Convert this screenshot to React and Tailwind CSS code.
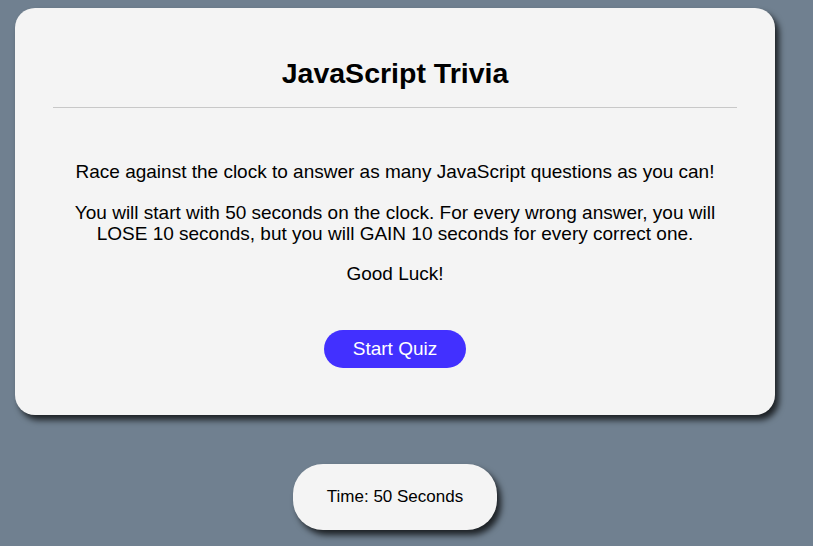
import React from 'react';

export default function App() {
  return (
    <div className="min-h-screen bg-[#708090] pt-[8px] font-['Liberation_Sans',Arial,sans-serif] text-black">
      <div className="ml-[15px] w-[760px]">
        <section className="h-[407px] rounded-[20px] bg-[#f4f4f4] px-[38px] text-center shadow-[4px_5px_6px_rgba(0,0,0,0.75)]">
          <h1 className="pt-[45px] text-[28.5px] font-bold leading-[40px]">JavaScript Trivia</h1>
          <hr className="mt-[14px] border-t border-[#c8c8c8]" />
          <div className="mt-[53px] px-[4px] text-[19px] leading-[21px]">
            <p>Race against the clock to answer as many JavaScript questions as you can!</p>
            <p className="mt-[20px]">
              You will start with 50 seconds on the clock. For every wrong answer, you will LOSE 10 seconds, but you will GAIN
              10 seconds for every correct one.
            </p>
            <p className="mt-[19px]">Good Luck!</p>
          </div>
          <button className="mt-[46px] h-[38px] w-[142px] rounded-full bg-[#4230ff] text-[19px] text-white">
            Start Quiz
          </button>
        </section>
        <div className="mx-auto mt-[49px] flex h-[66px] w-[204px] items-center justify-center rounded-[30px] bg-[#f4f4f4] text-[17px] shadow-[4px_5px_6px_rgba(0,0,0,0.75)]">
          Time: 50 Seconds
        </div>
      </div>
    </div>
  );
}
